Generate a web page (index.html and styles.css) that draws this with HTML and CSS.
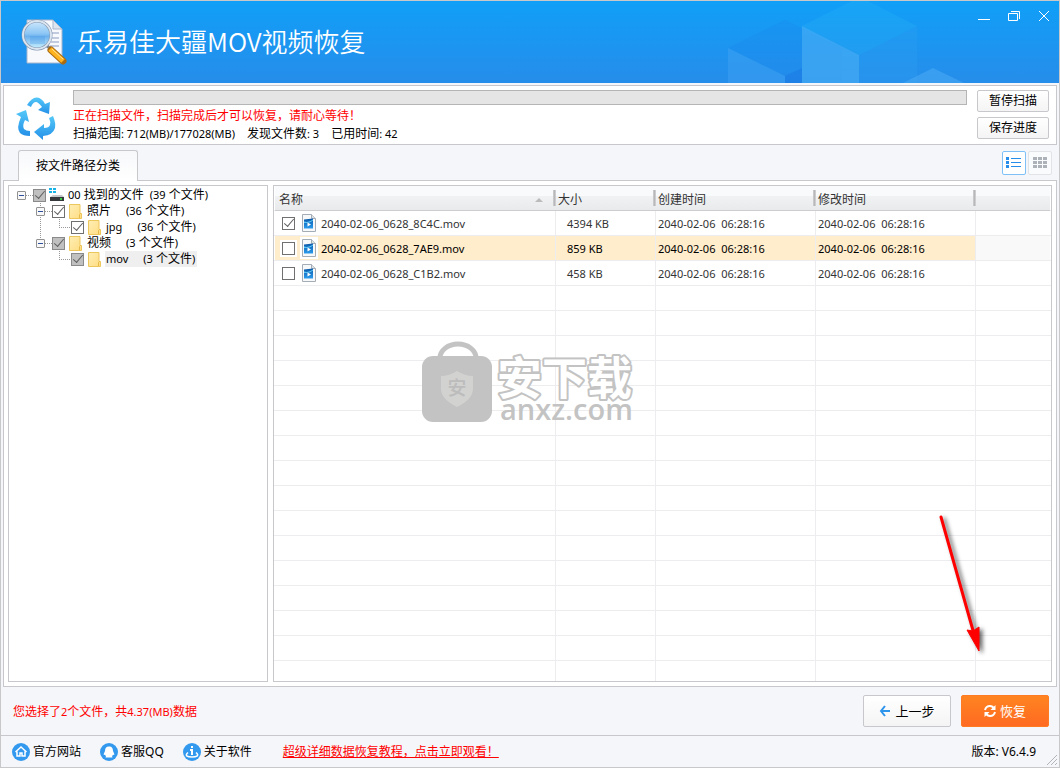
FILE: index.html
```html
<!DOCTYPE html>
<html lang="zh-CN">
<head>
<meta charset="utf-8">
<title>乐易佳大疆MOV视频恢复</title>
<link rel="stylesheet" href="styles.css">
</head>
<body>
<svg class="defs" aria-hidden="true">
  <defs>
    <linearGradient id="folderFill" x1="0" y1="0" x2="1" y2="1"><stop offset="0" stop-color="#ffeeb5"/><stop offset="1" stop-color="#ffdd82"/></linearGradient>
    <linearGradient id="movFill" x1="0" y1="0" x2="0" y2="1"><stop offset="0" stop-color="#0a58a8"/><stop offset="1" stop-color="#2b9cee"/></linearGradient>
    <linearGradient id="cycleFill" x1="0" y1="0" x2="0" y2="1"><stop offset="0" stop-color="#54c8f8"/><stop offset="1" stop-color="#2490e8"/></linearGradient>
    <symbol id="folder" viewBox="0 0 14 16"><path d="M.5 1.500h10.500v9h1.500v5H.5z" fill="url(#folderFill)" stroke="#edc65c"/><path d="M10.500 15v-3.500l1-1" fill="none" stroke="#e6b94a"/></symbol>
    <symbol id="mov" viewBox="0 0 14 18"><path d="M.5.5h9l4 4v13H.5z" fill="#f7f8f9" stroke="#a4adb5"/><path d="M9.500.5v4h4" fill="#dde2e6" stroke="#a4adb5"/><path d="M2 5.500l9-1v10H2z" fill="url(#movFill)"/><path d="M2 7.500c3 1 6 0 9-2v1c-3 2.500-6 2.500-9 2.500z" fill="#5cc6f5"/><path d="M5.500 8.500l3.500 2-3.500 2z" fill="#fff"/></symbol>
  </defs>
</svg>
<div class="window">
  <header class="titlebar">
    <svg class="cubes" viewBox="0 0 360 82" aria-hidden="true">
      <path d="M29 47L86 19l57 28v35H29z" fill="#1b84ea" opacity=".25"/>
      <path d="M29 47l57 28v7H29z" fill="#4ba9f5" opacity=".4"/>
      <path d="M86 75l17-8v15H86z" fill="#1a74e2" opacity=".4"/>
      <path d="M103 25L153 0h16l49 25-58 29z" fill="#28b4f4" opacity=".3"/>
      <path d="M103 25l57 29v28h-57z" fill="#4bb0f5" opacity=".6"/>
      <path d="M160 54l58-29v57h-58z" fill="#2f9df1" opacity=".35"/>
      <path d="M204 82l30-15 31 15z" fill="#50adf5" opacity=".5"/>
    </svg>
    <svg class="logo" viewBox="0 0 48 48" aria-hidden="true">
      <defs><linearGradient id="lens" x1="0" y1="0" x2="0" y2="1"><stop offset="0" stop-color="#cfe8fb"/><stop offset=".45" stop-color="#8cc6f5"/><stop offset=".55" stop-color="#6db1ed"/><stop offset="1" stop-color="#cdf3fd"/></linearGradient></defs>
      <path d="M6 2h26l9 9v34H6z" fill="#f8f9fd" stroke="#a9b6cc"/>
      <path d="M32 2v9h9z" fill="#dfe5ef" stroke="#a9b6cc"/>
      <path d="M29 15h9M30 20h8M30 24h8M29 28h9" stroke="#8b9cc2"/>
      <path d="M26 28l4 3" stroke="#7e8795" stroke-width="3"/>
      <path d="M30 32l12 11" stroke="#a96b11" stroke-width="7" stroke-linecap="round"/>
      <path d="M29 31l13 12" stroke="#ffb31f" stroke-width="5"/>
      <path d="M31 31l11 10" stroke="#ffe39a" stroke-width="1"/>
      <circle cx="16" cy="17" r="14" fill="url(#lens)" stroke="#7e92ad" stroke-width="3"/>
      <circle cx="16" cy="17" r="14" fill="none" stroke="#dbe5f0" stroke-width="2"/>
      <path d="M9 18h15v8H9z" fill="#3d93e6" opacity=".25"/>
    </svg>
    <h1 class="title">乐易佳大疆MOV视频恢复</h1>
    <div class="window-buttons">
      <button type="button" aria-label="最小化"><svg viewBox="0 0 12 12"><path d="M0 9.500h12"/></svg></button>
      <button type="button" aria-label="还原"><svg viewBox="0 0 12 12"><path d="M.5 3.500h9v7h-9zM3 1.500h8.500V9"/></svg></button>
      <button type="button" aria-label="关闭"><svg viewBox="0 0 12 12"><path d="M1 1l10 10M11 1L1 11"/></svg></button>
    </div>
  </header>

  <section class="scan">
    <svg class="cycle" viewBox="0 0 40 44" aria-hidden="true">
      <g fill="url(#cycleFill)">
        <path d="M11 9Q16 1 21 1.500Q26 2 29 8l5-2-1 12-11-4 4-3Q22 6 20 6q-3 0-5 5z"/>
        <path d="M0 18l10-4 3 12-4-2Q6 30 8 33q2 2 6 2v5Q7 40 4 37Q0 32 5 21z"/>
        <path d="M33 22l4-2q3 7 2 12-2 7-12 8v4l-9-8 10-8v4q5 0 6-3 1-3-1-7z"/>
      </g>
    </svg>
    <div class="scan-info">
      <progress class="bar" value="0" max="100" aria-label="扫描进度"></progress>
      <p class="notice">正在扫描文件，扫描完成后才可以恢复，请耐心等待！</p>
      <p class="stats"><span>扫描范围<span class="lat">: 712(MB)/177028(MB)</span></span><span>发现文件数<span class="lat">: 3</span></span><span>已用时间<span class="lat">: 42</span></span></p>
    </div>
    <div class="scan-actions">
      <button type="button" class="btn">暂停扫描</button>
      <button type="button" class="btn">保存进度</button>
    </div>
  </section>

  <nav class="tabs">
    <button type="button" class="tab">按文件路径分类</button>
    <div class="views">
      <button type="button" class="view view-on" aria-label="列表"><svg viewBox="0 0 16 12"><path d="M0 0h3v3H0zM0 4h3v3H0zM0 8h3v3H0zM5 1h10v1H5zM5 5h10v1H5zM5 9h10v1H5z"/></svg></button>
      <button type="button" class="view" aria-label="缩略图"><svg viewBox="0 0 16 12"><path d="M1 0h4v3H1zM6 0h4v3H6zM11 0h4v3h-4zM1 4h4v3H1zM6 4h4v3H6zM11 4h4v3h-4zM1 8h4v3H1zM6 8h4v3H6zM11 8h4v3h-4z"/></svg></button>
    </div>
  </nav>

  <main class="content">
    <aside class="tree-panel">
      <ul class="tree">
        <li class="root">
          <div class="node"><button type="button" class="toggle" aria-label="折叠"></button><i class="dots"></i><input type="checkbox" id="n0" class="check partial" checked><svg class="icon" viewBox="0 0 16 16"><path d="M0 1h3v2H0zM4 1h3v2H4zM0 4h3v2H0zM4 4h3v2H4z" fill="#18b4e8"/><path d="M4 8h9l2 2H1z" fill="#c4c8ca"/><path d="M1 10h14v4H1z" fill="#34383a"/><path d="M11 11h2v2h-2z" fill="#3fd04a"/></svg><label for="n0"><span class="lat">00</span> 找到的文件 <span class="lat">&nbsp;(39</span> 个文件<span class="lat">)</span></label></div>
          <ul>
            <li>
              <div class="node"><button type="button" class="toggle" aria-label="折叠"></button><i class="dots"></i><input type="checkbox" id="n1" class="check" checked><svg class="icon" viewBox="0 0 14 16"><use href="#folder"/></svg><label for="n1"><span class="name">照片</span><span class="lat">(36</span> 个文件<span class="lat">)</span></label></div>
              <ul>
                <li>
                  <div class="node"><i class="dots dots-leaf"></i><input type="checkbox" id="n2" class="check" checked><svg class="icon" viewBox="0 0 14 16"><use href="#folder"/></svg><label for="n2"><span class="name lat">jpg</span><span class="lat">(36</span> 个文件<span class="lat">)</span></label></div>
                </li>
              </ul>
            </li>
            <li>
              <div class="node"><button type="button" class="toggle" aria-label="折叠"></button><i class="dots"></i><input type="checkbox" id="n3" class="check partial" checked><svg class="icon" viewBox="0 0 14 16"><use href="#folder"/></svg><label for="n3"><span class="name">视频</span><span class="lat">(3</span> 个文件<span class="lat">)</span></label></div>
              <ul>
                <li>
                  <div class="node"><i class="dots dots-leaf"></i><input type="checkbox" id="n4" class="check partial" checked><svg class="icon" viewBox="0 0 14 16"><use href="#folder"/></svg><label for="n4" class="selected"><span class="name lat">mov</span><span class="lat">(3</span> 个文件<span class="lat">)</span></label></div>
                </li>
              </ul>
            </li>
          </ul>
        </li>
      </ul>
    </aside>

    <div class="list-panel">
      <table class="files">
        <colgroup><col class="c-name"><col class="c-size"><col class="c-date"><col class="c-date"><col></colgroup>
        <thead>
          <tr><th><div class="sorted">名称<i class="arrow-up"></i></div></th><th>大小</th><th>创建时间</th><th>修改时间</th><td></td></tr>
        </thead>
        <tbody>
          <tr>
            <td><div class="file"><input type="checkbox" id="f1" class="check" checked><svg class="doc" viewBox="0 0 14 18"><use href="#mov"/></svg><label for="f1">2040-02-06_0628_8C4C.mov</label></div></td>
            <td class="size">4394 KB</td><td>2040-02-06&nbsp; 06:28:16</td><td>2040-02-06&nbsp; 06:28:16</td><td></td>
          </tr>
          <tr class="hot">
            <td><div class="file"><input type="checkbox" id="f2" class="check"><svg class="doc" viewBox="0 0 14 18"><use href="#mov"/></svg><label for="f2">2040-02-06_0628_7AE9.mov</label></div></td>
            <td class="size">859 KB</td><td>2040-02-06&nbsp; 06:28:16</td><td>2040-02-06&nbsp; 06:28:16</td><td></td>
          </tr>
          <tr>
            <td><div class="file"><input type="checkbox" id="f3" class="check"><svg class="doc" viewBox="0 0 14 18"><use href="#mov"/></svg><label for="f3">2040-02-06_0628_C1B2.mov</label></div></td>
            <td class="size">458 KB</td><td>2040-02-06&nbsp; 06:28:16</td><td>2040-02-06&nbsp; 06:28:16</td><td></td>
          </tr>
        </tbody>
      </table>
      <svg class="watermark" viewBox="0 0 220 90">
        <path d="M20 18a18 14 0 0 1 36 0" fill="none" stroke="#c3c3c3" stroke-width="5"/>
        <rect x="2" y="16" width="70" height="66" rx="11" fill="#c3c3c3"/>
        <path d="M37 31q8 5 16 5v13q0 10-16 18-16-8-16-18V36q8 0 16-5z" fill="#d2d2d0"/>
        <text x="37" y="55" class="wm-mark">安</text>
        <text x="77" y="55" class="wm-name">安下载</text>
        <text x="80" y="80" class="wm-site">anxz.com</text>
      </svg>
      <svg class="pointer" viewBox="0 0 60 150" aria-hidden="true"><path d="M10 6L43 123" stroke="#f00" stroke-width="3" stroke-linecap="round"/><path d="M36 119l6 1 6-4 0 24z" fill="#f00" stroke="#f00"/></svg>
    </div>
  </main>

  <section class="actions">
    <p class="summary">您选择了<span class="lat">2</span>个文件，共<span class="lat">4.37(MB)</span>数据</p>
    <button type="button" class="btn big"><svg viewBox="0 0 12 12"><path d="M6 1L2 6l4 5M2 6h9" fill="none" stroke="#2d94ec" stroke-width="2"/></svg>上一步</button>
    <button type="button" class="btn big primary"><svg viewBox="0 0 12 12"><path d="M1 5q1-4 5-4 2 0 4 2M11 7q-1 4-5 4-2 0-4-2" fill="none" stroke="#fff" stroke-width="2"/><path d="M11.500 0v5h-5zM.5 12V7h5z" fill="#fff"/></svg>恢复</button>
  </section>

  <footer class="status">
    <a href="#" class="s-link"><svg viewBox="0 0 18 18"><circle cx="9" cy="9" r="9" fill="#3399ee"/><path d="M3.500 9L9 4l5.500 5M5 8.500V13h3v-3h2v3h3V8.500" fill="none" stroke="#fff" stroke-width="1.500"/></svg>官方网站</a>
    <a href="#" class="s-link"><svg viewBox="0 0 18 18"><circle cx="9" cy="9" r="9" fill="#3399ee"/><path d="M9 3.500c3 0 4 2 4 4.500l1.500 3.500-1.500.5-1 1 .5 1.500H5.500L6 13l-1-1-1.500-.5L5 8c0-2.500 1-4.500 4-4.500z" fill="#fff"/></svg>客服QQ</a>
    <a href="#" class="s-link"><svg viewBox="0 0 18 18"><circle cx="9" cy="9" r="9" fill="#3399ee"/><path d="M9 3v2M7 7h2v5" fill="none" stroke="#fff" stroke-width="2"/><path d="M5 9.500C1 13 5 14 9 14s8-1 4-4.500" fill="none" stroke="#fff" stroke-width="1.500"/></svg>关于软件</a>
    <a href="#" class="guide">超级详细数据恢复教程，点击立即观看！</a>
    <span class="version">版本: V6.4.9</span>
    <svg class="grip" viewBox="0 0 12 12" aria-hidden="true"><path d="M1 11L11 1M5 11l6-6M9 11l2-2" stroke="#b4b4b8"/></svg>
  </footer>
</div>
</body>
</html>
```
FILE: styles.css
```css
* { box-sizing: border-box; }
body, h1, p, ul { margin: 0; padding: 0; }
body {
  font: 12px/16px "Noto Sans", "Noto Sans CJK SC", sans-serif;
  color: #000;
  text-autospace: no-autospace;
}
button { font: inherit; color: inherit; padding: 0; cursor: pointer; }
svg { display: block; flex: none; }
.defs { position: absolute; width: 0; height: 0; }
.lat { font-size: 11px; }

.window {
  display: flex;
  flex-direction: column;
  min-height: 100vh;
  border: 1px solid #c8c8cb;
  background: #f5f6f9;
}

/* title bar */
.titlebar {
  position: relative;
  display: flex;
  align-items: center;
  height: 82px;
  padding-left: 20px;
  background: linear-gradient(#109ff8, #268dea);
  color: #fff;
}
.cubes { position: absolute; right: 0; top: 0; width: 360px; height: 82px; }
.logo { width: 48px; height: 48px; }
.title {
  flex: 1;
  margin-left: 8px;
  padding-bottom: 2px;
  font: 350 26px/40px "Noto Sans CJK SC", sans-serif;
}
.window-buttons {
  position: relative;
  display: flex;
  align-self: flex-start;
  gap: 18px;
  padding: 9px 9px 0 0;
}
.window-buttons button { border: 0; background: none; }
.window-buttons svg { width: 12px; height: 12px; fill: none; stroke: #fff; }

/* scan panel */
.scan {
  display: flex;
  margin: 2px 2px 0;
  padding: 4px 7px 0 12px;
  border: 1px solid #c8c8cc;
  background: #fff;
}
.cycle { width: 40px; height: 44px; margin: 6px 17px 0 0; }
.scan-info { flex: 1; }
.bar {
  display: block;
  width: 100%;
  height: 15px;
  margin-bottom: 2px;
  border: 1px solid #b5b5b5;
  appearance: none;
  background: #e5e5e5;
}
.bar::-webkit-progress-bar { background: #e5e5e5; }
.notice, .stats { line-height: 18px; }
.notice, .summary { color: #f00; }
.stats { display: flex; gap: 12px; }
.scan-actions {
  display: flex;
  flex-direction: column;
  gap: 5px;
  width: 72px;
  margin-left: 10px;
  padding-bottom: 5px;
}
.btn {
  height: 22px;
  border: 1px solid #c8c8cc;
  border-radius: 2px;
  background: linear-gradient(#fff, #f4f4f5);
}

/* tabs */
.tabs {
  display: flex;
  justify-content: space-between;
  margin: 5px 7px 0 17px;
}
.tab {
  position: relative;
  width: 120px;
  height: 31px;
  margin-bottom: -1px;
  border: 1px solid #c8c8cc;
  border-bottom: 0;
  border-radius: 3px 3px 0 0;
  background: linear-gradient(#f7f8fa, #fff);
}
.views { display: flex; gap: 2px; padding-top: 1px; }
.view {
  display: grid;
  place-items: center;
  width: 24px;
  height: 24px;
  border: 1px solid #e2e3e6;
  border-radius: 2px;
  background: #fafbfc;
}
.view svg { width: 16px; height: 12px; fill: #adb1b8; }
.view-on { border-color: #7fc1f7; background: #fff; }
.view-on svg { fill: #268dea; }

/* content */
.content {
  flex: 1;
  display: flex;
  gap: 5px;
  margin: 0 2px;
  padding: 4px;
  border: 1px solid #c8c8cc;
  background: #fff;
}
.tree-panel {
  width: 260px;
  padding: 1px 8px;
  border: 1px solid #c8c8cc;
}
.tree, .tree ul { list-style: none; }
.tree ul { padding-left: 19px; }
.tree li {
  background: repeating-linear-gradient(#999 0 1px, transparent 1px 2px) 4px 0 / 1px 100% no-repeat;
}
.tree li:last-child { background-size: 1px 8px; }
.tree .root { background: none; }
.node { display: flex; align-items: center; height: 16px; white-space: nowrap; }
.toggle {
  width: 9px;
  height: 9px;
  border: 1px solid #919191;
  border-radius: 1px;
  background: linear-gradient(#2d4f9e, #2d4f9e) center / 5px 1px no-repeat #f8f8f8;
}
.dots {
  width: 7px;
  height: 1px;
  background: repeating-linear-gradient(90deg, #999 0 1px, transparent 1px 2px);
}
.dots-leaf { width: 12px; margin-left: 4px; }
.check {
  flex: none;
  width: 13px;
  height: 13px;
  margin: 0;
  border: 1px solid #707070;
  appearance: none;
  background: #fff;
  display: grid;
  place-items: center;
}
.check:checked::before {
  content: "";
  width: 9px;
  height: 4px;
  margin-bottom: 3px;
  border: solid #606060;
  border-width: 0 0 1px 1px;
  transform: rotate(-50deg);
}
.partial { background: #c0c0c0; border-color: #8a8a8a; }
.icon { width: 16px; height: 16px; margin: 0 2px 0 3px; }
.node label { padding: 0 2px 0 1px; }
.name { margin-right: 15px; }
.selected { background: #efefef; }

/* file list */
.list-panel {
  position: relative;
  flex: 1;
  border: 1px solid #c8c8cc;
  padding: 0 1px;
  background:
    linear-gradient(#ededf0, #ededf0) 281px 0 / 1px 100% no-repeat,
    linear-gradient(#ededf0, #ededf0) 381px 0 / 1px 100% no-repeat,
    linear-gradient(#ededf0, #ededf0) 541px 0 / 1px 100% no-repeat,
    linear-gradient(#ededf0, #ededf0) 701px 0 / 1px 100% no-repeat,
    repeating-linear-gradient(transparent 0 24px, #ededf0 24px 25px);
}
.files {
  width: 100%;
  table-layout: fixed;
  border-collapse: separate;
  border-spacing: 0;
  font-size: 11px;
  color: #333;
}
.c-name { width: 281px; }
.c-size { width: 100px; }
.c-date { width: 160px; }
.files tr { height: 25px; }
.files td, .files th { padding: 0 2px; }
.files thead tr > * {
  border-bottom: 1px solid #cdcdd0;
  background: linear-gradient(#f9fafb 40%, #f1f2f4 40%, #e9eaec);
  font-size: 12px;
  font-weight: 400;
  text-align: left;
}
.files thead tr > th {
  padding-top: 3px;
  background:
    linear-gradient(90deg, #d0d0d2, #b8b8ba, #d8d8da) right center / 3px 16px no-repeat,
    linear-gradient(#f9fafb 40%, #f1f2f4 40%, #e9eaec);
}
.files thead th:first-child { padding-left: 4px; padding-right: 13px; }
.files tbody td { padding-top: 2px; border-right: 1px solid #ededf0; border-bottom: 1px solid #ededf0; background: #fff; }
.files tbody td:first-child { padding-top: 0; }
.files tbody td:last-child { border-right: 0; }
.files tbody .size { padding-left: 11px; }
.files .hot td { background: #ffedcc; color: #000; }
.files .hot td:last-child { background: #f9f9fa; }
.sorted { display: flex; align-items: center; justify-content: space-between; }
.arrow-up { border: solid transparent; border-width: 0 4px 4px; border-bottom-color: #bbb; }
.file { display: flex; align-items: center; gap: 7px; padding-left: 5px; }
.doc { width: 14px; height: 18px; }
.file label { margin-left: -2px; padding-top: 2px; }
.hot .check, .hot .doc { outline: 2px solid #fff; background: #fff; }

.watermark { position: absolute; left: 146px; top: 154px; width: 220px; height: 90px; }
.watermark text { font-family: "Noto Sans CJK SC", sans-serif; }
.wm-mark { font-size: 19px; font-weight: 500; fill: #bcbcbc; text-anchor: middle; }
.watermark .wm-name {
  font-size: 45px;
  font-weight: 700;
  fill: #fff;
  stroke: #c3c3c3;
  stroke-width: 4px;
  stroke-linejoin: round;
  paint-order: stroke;
}
.watermark .wm-site { font: 600 29px "Open Sans", sans-serif; fill: #c3c3c3; }
.pointer {
  position: absolute;
  left: 657px;
  top: 325px;
  width: 60px;
  height: 150px;
  filter: drop-shadow(3px 2px 2px rgba(0, 0, 0, .6));
}

/* bottom rows */
.actions {
  display: flex;
  align-items: center;
  gap: 10px;
  padding: 8px 10px 8px 12px;
  border-bottom: 1px solid #c8c8cc;
}
.summary { flex: 1; padding-top: 2px; }
.big {
  display: flex;
  align-items: center;
  justify-content: center;
  gap: 4px;
  width: 88px;
  height: 32px;
  font-size: 13px;
}
.big svg { width: 12px; height: 12px; }
.primary { border-color: #ff7a20; background: linear-gradient(#ff8420, #ff6a22); color: #fff; }
.status {
  position: relative;
  display: flex;
  align-items: center;
  height: 31px;
  padding: 0 23px 0 11px;
}
.status a { text-decoration: none; color: #000; }
.s-link { display: flex; align-items: center; gap: 3px; margin-right: 19px; }
.s-link svg { width: 18px; height: 18px; }
.status .guide { margin-left: 12px; color: #f00; text-decoration: underline; }
.version { margin-left: auto; }
.grip { position: absolute; right: 1px; bottom: 1px; width: 12px; height: 12px; }
```
